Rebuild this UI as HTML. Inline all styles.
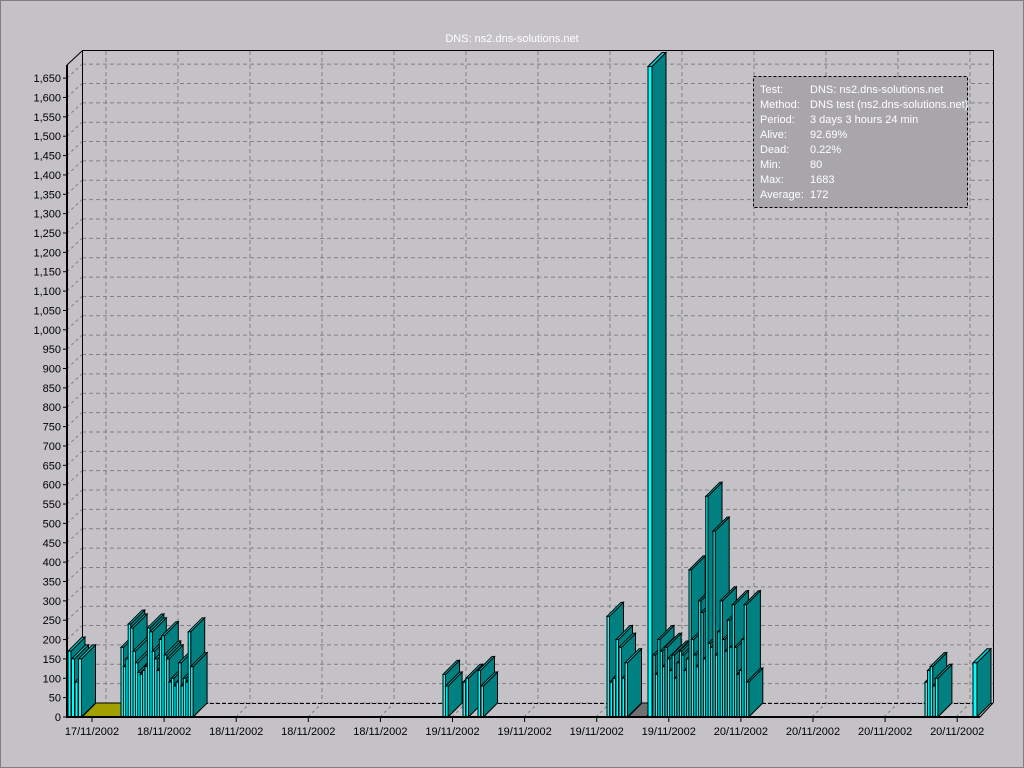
<!DOCTYPE html>
<html><head><meta charset="utf-8"><style>
html,body{margin:0;padding:0;background:#c4c2c6;}
svg{display:block}
text{font-family:"Liberation Sans",sans-serif;font-size:11px}
</style></head><body>
<svg id="s" width="1024" height="768" xmlns="http://www.w3.org/2000/svg">
<rect x="0" y="0" width="1024" height="768" fill="#c4c2c6"/>
<rect x="0.5" y="0.5" width="1023" height="767" fill="none" stroke="#808080"/>
<text x="512" y="42" fill="#fff" text-anchor="middle" font-size="12">DNS:  ns2.dns-solutions.net</text>
<g id="grid"></g>
<g id="bars"></g>
<g id="axis"></g>
<g>
<rect x="753.5" y="76.5" width="214" height="131" fill="#a8a6aa" stroke="#000" stroke-dasharray="3,2"/>
<g fill="#fff">
<text x="760" y="93">Test:</text><text x="810" y="93">DNS:  ns2.dns-solutions.net</text>
<text x="760" y="108">Method:</text><text x="810" y="108">DNS test (ns2.dns-solutions.net)</text>
<text x="760" y="123">Period:</text><text x="810" y="123">3 days 3 hours 24 min</text>
<text x="760" y="138">Alive:</text><text x="810" y="138">92.69%</text>
<text x="760" y="153">Dead:</text><text x="810" y="153"> 0.22%</text>
<text x="760" y="168">Min:</text><text x="810" y="168">80</text>
<text x="760" y="183">Max:</text><text x="810" y="183">1683</text>
<text x="760" y="198">Average:</text><text x="810" y="198">172</text>
</g></g>
</svg>
<script>
var NS="http://www.w3.org/2000/svg";
function el(p,t,a,txt){var e=document.createElementNS(NS,t);for(var k in a)e.setAttribute(k,a[k]);if(txt!=null)e.textContent=txt;p.appendChild(e);return e;}
var g=document.getElementById('grid'),b=document.getElementById('bars'),ax=document.getElementById('axis');
var P=19.36/50, Y0=717, D=14;
// back wall grid
for(var k=0;k<=33;k++){var y=703-k*19.36;
 el(g,'line',{x1:82,y1:y,x2:993,y2:y,stroke:'#808080','stroke-dasharray':'4,3'});
 el(g,'line',{x1:67,y1:y+14,x2:82,y2:y,stroke:'#808080','stroke-dasharray':'3,3'});
}
for(var x=106;x<993;x+=72){el(g,'line',{x1:x,y1:51,x2:x,y2:703,stroke:'#808080','stroke-dasharray':'4,3'});
 el(g,'line',{x1:x-14,y1:717,x2:x,y2:703,stroke:'#808080','stroke-dasharray':'3,3'});}
el(g,'line',{x1:82,y1:50.5,x2:993,y2:50.5,stroke:'#000'});
el(g,'line',{x1:993.5,y1:50,x2:993.5,y2:703,stroke:'#000'});
el(g,'line',{x1:82.5,y1:50,x2:82.5,y2:703,stroke:'#000'});
el(g,'line',{x1:67,y1:65,x2:82,y2:51,stroke:'#000'});
el(g,'line',{x1:120,y1:703.5,x2:993,y2:703.5,stroke:'#000','stroke-dasharray':'4,2'});
// yellow hatch floor
el(b,'polygon',{points:'82,717 96,703 136,703 122,717',fill:'#a0a000',stroke:'#000'});
el(b,'polygon',{points:'628,717 642,703 660,703 646,717',fill:'#707070',stroke:'#000'});
function bar(x,w,v){var h=v*P,t=Y0-h;
 el(b,'polygon',{points:(x+w)+','+Y0+' '+(x+w+D)+','+(Y0-D)+' '+(x+w+D)+','+(t-D)+' '+(x+w)+','+t,fill:'#008080',stroke:'#000'});
 el(b,'polygon',{points:x+','+t+' '+(x+D)+','+(t-D)+' '+(x+w+D)+','+(t-D)+' '+(x+w)+','+t,fill:'#00c8c8',stroke:'#000'});
 el(b,'rect',{x:x,y:t,width:w,height:h,fill:'#00ffff',stroke:'#000'});}
function cl(x0,step,w,vals){for(var i=0;i<vals.length;i++)bar(x0+i*step,w,vals[i]);}
cl(68,3.5,3,[170,150,90,150]);
cl(121,2.4,2.5,[180,130,150,240,230,170,140,115,110,120,130,230,220,170,150,120,200,210,160,150,90,100,80,90,140,80,100,90,220,130]);
cl(443,2.6,2.5,[110,80]);cl(463,3,2.5,[90,100]);cl(478,3,2.5,[120,80]);
cl(607,3,2.5,[260,90,100,200,180,100,140]);
bar(648,4,1680);
cl(653,2.4,2.2,[160,110,200,170,130,180,150,120,160,100,140,170,160,120,150,380,200,160,130,300,270,150,570,190,180,480,160,220,300,200,170,250,180,290,180,110,120,200,290,90]);
cl(925,2.6,2.5,[90,120,130,80,100]);
bar(973,4,140);
// axis
el(ax,'line',{x1:67,y1:65,x2:67,y2:718,stroke:'#000','stroke-width':2});
el(ax,'line',{x1:66,y1:717,x2:980,y2:717,stroke:'#000','stroke-width':2});
el(ax,'line',{x1:980,y1:717,x2:993,y2:703,stroke:'#000'});
for(var k=0;k<=33;k++){var y=717-k*19.36,v=k*50;
 var s=v>=1000?(Math.floor(v/1000)+','+('00'+(v%1000)).slice(-3)):''+v;
 el(ax,'line',{x1:63,y1:y,x2:67,y2:y,stroke:'#000'});
 el(ax,'text',{x:61,y:y+4,'text-anchor':'end',fill:'#000'},s);}
var labs=['17/11/2002','18/11/2002','18/11/2002','18/11/2002','18/11/2002','19/11/2002','19/11/2002','19/11/2002','19/11/2002','20/11/2002','20/11/2002','20/11/2002','20/11/2002'];
for(var i=0;i<labs.length;i++){var x=92+i*72.1;
 el(ax,'line',{x1:x,y1:717,x2:x,y2:722,stroke:'#000'});
 el(ax,'text',{x:x,y:735,'text-anchor':'middle',fill:'#000'},labs[i]);}
</script>
</body></html>
